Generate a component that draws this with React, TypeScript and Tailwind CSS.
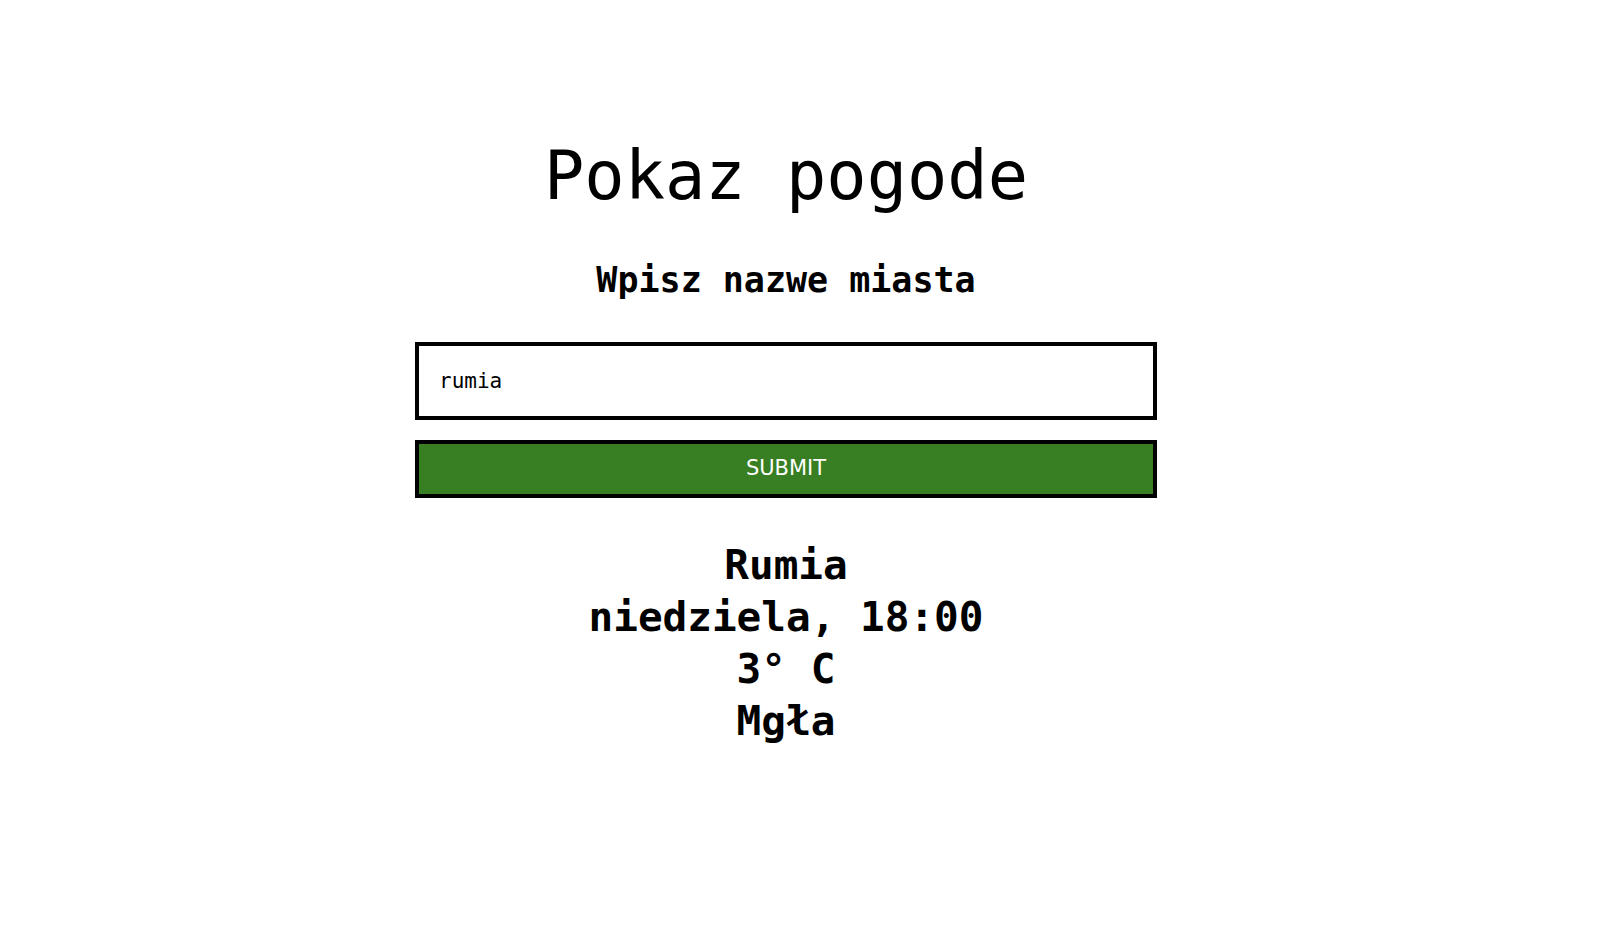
import { useState } from "react";

export default function App() {
  const [city, setCity] = useState("rumia");

  const weather = {
    name: "Rumia",
    day: "niedziela, 18:00",
    temp: "3° C",
    desc: "Mgła",
  };

  return (
    <div className="min-h-[946px] w-full bg-white text-black font-['DejaVu_Sans_Mono',monospace]">
      <div className="ml-[415px] flex w-[742px] flex-col items-center pt-[143px]">
        {/* Header */}
        <h1 className="text-[67px] font-normal leading-none">Pokaz pogode</h1>
        <h2 className="mt-[53px] text-[35px] font-bold leading-none">Wpisz nazwe miasta</h2>

        {/* Form */}
        <form className="mt-[44px] flex w-full flex-col gap-5" onSubmit={(e) => e.preventDefault()}>
          <input
            type="text"
            value={city}
            onChange={(e) => setCity(e.target.value)}
            className="h-[78px] w-full border-4 border-black bg-white px-5 text-[21px] text-black outline-none font-['DejaVu_Sans_Mono',monospace]"
          />
          <button
            type="submit"
            className="h-[58px] w-full border-4 border-black bg-[#387e23] text-[21px] text-white font-['DejaVu_Sans',sans-serif]"
          >
            SUBMIT
          </button>
        </form>

        {/* Result */}
        <div className="mt-[41px] flex flex-col items-center text-[41px] font-bold leading-[52px]">
          <div>{weather.name}</div>
          <div>{weather.day}</div>
          <div>{weather.temp}</div>
          <div>{weather.desc}</div>
        </div>
      </div>
    </div>
  );
}
